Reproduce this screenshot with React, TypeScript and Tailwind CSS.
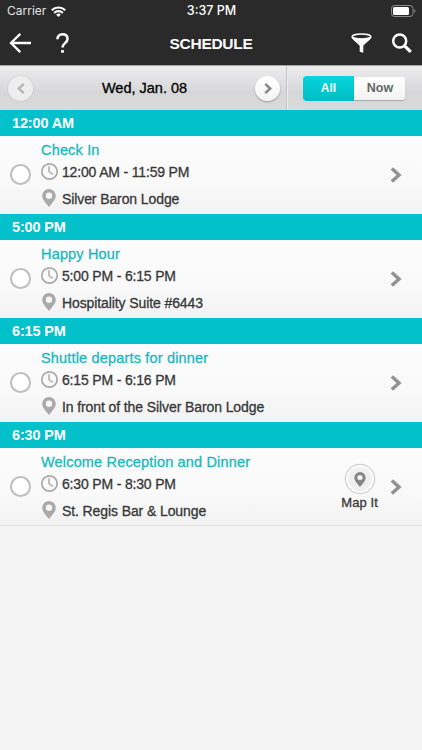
import { clsx } from "clsx"

type Session = {
  slot: string
  title: string
  time: string
  place: string
  mappable?: boolean
}

const SESSIONS: Session[] = [
  {
    slot: "12:00 AM",
    title: "Check In",
    time: "12:00 AM - 11:59 PM",
    place: "Silver Baron Lodge",
  },
  {
    slot: "5:00 PM",
    title: "Happy Hour",
    time: "5:00 PM - 6:15 PM",
    place: "Hospitality Suite #6443",
  },
  {
    slot: "6:15 PM",
    title: "Shuttle departs for dinner",
    time: "6:15 PM - 6:16 PM",
    place: "In front of the Silver Baron Lodge",
  },
  {
    slot: "6:30 PM",
    title: "Welcome Reception and Dinner",
    time: "6:30 PM - 8:30 PM",
    place: "St. Regis Bar & Lounge",
    mappable: true,
  },
]

function PinIcon({ className }: { className?: string }) {
  return (
    <svg className={className} viewBox="0 0 14 18" fill="currentColor">
      <path
        fillRule="evenodd"
        d="M7 0a6.800 6.800 0 0 1 6.800 6.800C13.800 10.600 9.600 14.600 7 18 4.400 14.600.2 10.600.2 6.800A6.800 6.800 0 0 1 7 0Zm0 3.500a3.200 3.200 0 1 0 0 6.400 3.200 3.200 0 0 0 0-6.400Z"
      />
    </svg>
  )
}

function ClockIcon() {
  return (
    <svg
      className="-ml-px size-[19px]"
      viewBox="0 0 19 19"
      fill="none"
      stroke="#a9a9a9"
    >
      <circle cx="9.500" cy="9.500" r="7.700" strokeWidth="1.700" />
      <path d="M9 4.300v5.200l3.700 2.900" strokeWidth="1.500" />
    </svg>
  )
}

function StatusBar() {
  return (
    <div className="grid h-[22px] grid-cols-3 items-center pl-[7px] pr-[6px] font-['Inter',sans-serif] text-[12.5px]">
      <div className="flex items-center gap-[5px] text-[#e4e4e4]">
        <span className="text-[12px]">Carrier</span>
        <svg className="h-[11px] w-[15px]" viewBox="0 0 15 11" fill="none">
          <g stroke="#fff" strokeWidth="2.100">
            <path d="M.8 4.200a9.600 9.600 0 0 1 13.400 0" />
            <path d="M3.200 6.900a6.100 6.100 0 0 1 8.600 0" />
          </g>
          <path d="M7.500 11 5.200 8.700a3.300 3.300 0 0 1 4.600 0Z" fill="#fff" />
        </svg>
      </div>
      <div className="text-center font-medium">3:37 PM</div>
      <svg
        className="h-[12px] w-[25px] justify-self-end"
        viewBox="0 0 25 12"
        fill="none"
      >
        <rect
          x=".5"
          y=".5"
          width="21.500"
          height="11"
          rx="3"
          stroke="#8b8b8b"
        />
        <rect x="2" y="2" width="16" height="8" rx="1.500" fill="#fff" />
        <path d="M23.300 4v4c1.500-.5 1.500-3.500 0-4Z" fill="#8b8b8b" />
      </svg>
    </div>
  )
}

function NavBar() {
  return (
    <div className="grid h-[42px] grid-cols-[1fr_auto_1fr] items-center px-[9px]">
      <div className="flex items-center gap-[25px]">
        <svg
          className="h-[20px] w-[22px]"
          viewBox="0 0 22 20"
          fill="none"
          stroke="#fff"
          strokeWidth="2.300"
        >
          <path d="M22 10H2M11.300.9 2 10l9.300 9.100" />
        </svg>
        <svg
          className="h-[20px] w-[13px]"
          viewBox="0 0 13 20"
          fill="none"
          stroke="#fff"
          strokeWidth="2.500"
        >
          <path d="M1.400 6.200C1.400 3 3.400 1.300 6.400 1.300s5.100 1.700 5.100 4.600c0 4.200-5 4.300-5 8.700" />
          <path d="M6.500 17v2.800" strokeWidth="2.700" />
        </svg>
      </div>
      <h1 className="pt-px text-[15.5px] font-bold tracking-[-0.3px]">
        SCHEDULE
      </h1>
      <div className="flex items-center justify-end gap-[19px]">
        <svg className="h-[20px] w-[21px]" viewBox="0 0 21 20">
          <path
            d="M.5 3.500C.5 6 3 7 8.700 12.800v6l3.600 1v-7C18 7 20.500 6 20.500 3.500Z"
            fill="#fff"
          />
          <ellipse
            cx="10.500"
            cy="3.500"
            rx="9.300"
            ry="2.600"
            fill="#2a2a2a"
            stroke="#fff"
            strokeWidth="1.500"
          />
        </svg>
        <svg
          className="mr-px h-[20px] w-[21px]"
          viewBox="0 0 21 20"
          fill="none"
          stroke="#fff"
        >
          <circle cx="8.700" cy="8" r="6.500" strokeWidth="2.500" />
          <path d="m13.300 12.600 6.500 6.300" strokeWidth="3.200" />
        </svg>
      </div>
    </div>
  )
}

function DayButton({
  direction,
  disabled,
}: {
  direction: "prev" | "next"
  disabled?: boolean
}) {
  return (
    <button
      aria-label={direction}
      className={clsx(
        "grid size-[25px] place-items-center rounded-full",
        disabled
          ? "bg-[#eeeeee] text-[#b7b7b7] shadow-[0_0_1px_1px_rgba(0,0,0,0.05)]"
          : "bg-linear-to-b from-white to-[#f4f4f4] text-[#868686] shadow-[0_1px_2px_rgba(0,0,0,0.3)]",
      )}
    >
      <svg
        className={clsx("h-[11px] w-[8px]", direction === "prev" && "-scale-x-100")}
        viewBox="0 0 8 11"
        fill="none"
        stroke="currentColor"
        strokeWidth="2.500"
      >
        <path d="M1.200.9 6.200 5.500l-5 4.600" />
      </svg>
    </button>
  )
}

function DayBar() {
  return (
    <div className="flex h-[45px] border-t border-[#a5a5a5] bg-linear-to-b from-[#ededee] via-[#d7d6d8] via-60% to-[#dadada] text-black">
      <div className="flex w-[287px] items-center justify-between border-r border-[#c5c5c7] pl-[8px] pr-[6px]">
        <DayButton direction="prev" disabled />
        <div className="pt-[2px] pl-px text-[14.5px] [-webkit-text-stroke:0.3px]">
          Wed, Jan. 08
        </div>
        <DayButton direction="next" />
      </div>
      <div className="flex flex-1 items-center border-l border-[#ececec] pl-[15px]">
        <div className="flex h-[25px] w-[102px] items-center font-bold">
          <button className="h-[25px] w-[51px] rounded-l-[4px] bg-linear-to-b from-[#05d5db] to-[#02bcc5] text-[12px] text-white">
            All
          </button>
          <button className="h-[23px] w-[51px] rounded-r-[3px] bg-linear-to-b from-white to-[#f3f3f3] pt-px pl-px text-[12.5px] text-[#646464] shadow-[0_1px_1px_rgba(0,0,0,0.22)]">
            Now
          </button>
        </div>
      </div>
    </div>
  )
}

function SessionRow({ session }: { session: Session }) {
  return (
    <section className="group">
      <h2 className="h-[26px] bg-[#02c1ca] pl-[12px] text-[14.5px] font-bold leading-[27px] tracking-[-0.15px] text-white">
        {session.slot}
      </h2>
      <div className="flex h-[78px] items-center bg-linear-to-b from-[#fcfcfc] via-[#f9f9f9] via-60% to-[#f2f2f3] pb-px pl-[10px] pr-[20px] group-last:h-[77px] group-last:pb-0">
        <span className="mr-[10px] size-[21px] shrink-0 rounded-full border-2 border-[#bdbdbd] bg-white" />
        <div className="flex h-full flex-1 flex-col pt-[4px] text-[14px] text-[#383838] [-webkit-text-stroke:0.3px]">
          <h3 className="h-[20px] whitespace-nowrap text-[14.5px] leading-[20px] tracking-[0.17px] text-[#1bb8bf]">
            {session.title}
          </h3>
          <div className="flex h-[24px] items-center gap-[3px]">
            <ClockIcon />
            <span className="pt-[2px] tracking-[-0.17px]">{session.time}</span>
          </div>
          <div className="flex h-[30px] items-center">
            <PinIcon className="ml-px mr-[6px] h-[18px] w-[14px] text-[#a9a9a9]" />
            <span className="pt-[2px] tracking-[-0.1px]">{session.place}</span>
          </div>
        </div>
        {session.mappable && (
          <div className="mr-[12px] flex h-full flex-col items-center pt-[17px] text-[13px] text-[#383838]">
            <span className="grid size-[28px] place-items-center rounded-full border-2 border-white bg-[#efefef] text-[#858585] shadow-[0_0_1px_1px_#c4c4c4]">
              <PinIcon className="h-[15px] w-[12px]" />
            </span>
            <span className="mt-[2px] leading-[16px] tracking-[0.1px] [-webkit-text-stroke:0.3px]">
              Map It
            </span>
          </div>
        )}
        <svg
          className="h-[16px] w-[12px]"
          viewBox="0 0 12 16"
          fill="none"
          stroke="#929292"
          strokeWidth="3.500"
        >
          <path d="M1.800 1.500 9 8l-7.200 6.500" />
        </svg>
      </div>
    </section>
  )
}

function App() {
  return (
    <div className="min-h-[750px] w-[422px] bg-[#f4f4f4] font-['Liberation_Sans',Arial,sans-serif]">
      <header className="h-[65px] bg-[#2a2a2a] text-white">
        <StatusBar />
        <NavBar />
      </header>
      <DayBar />
      <main className="border-b border-[#dedede]">
        {SESSIONS.map((session) => (
          <SessionRow key={session.slot} session={session} />
        ))}
      </main>
    </div>
  )
}

export default App
